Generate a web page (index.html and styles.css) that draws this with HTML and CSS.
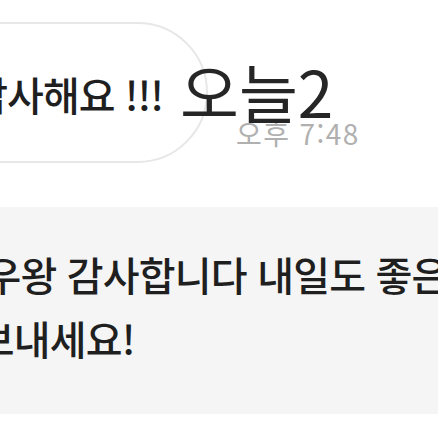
FILE: index.html
```html
<!DOCTYPE html>
<html lang="ko">
<head>
<meta charset="utf-8">
<link rel="stylesheet" href="styles.css">
</head>
<body>
<div class="chat">
  <div class="row">
    <div class="bubble"><span class="msg">정말 감사해요 !!!</span></div>
    <span class="time">오후 7:48</span>
    <span class="note">오늘2</span>
  </div>
  <div class="panel">
    <div class="line l1">너무 우왕 감사합니다 내일도 좋은 하루</div>
    <div class="line l2">좋은 하루 보내세요!</div>
  </div>
</div>
</body>
</html>
```
FILE: styles.css
```css
html, body {
  margin: 0;
  padding: 0;
  background: #ffffff;
}
body {
  width: 438px;
  height: 438px;
  overflow: hidden;
  font-family: "Noto Sans CJK KR", "Noto Sans", sans-serif;
  color: #1f1f1f;
}
.chat {
  padding-top: 22px;
}
.row {
  position: relative;
  display: flex;
  align-items: flex-end;
}
.bubble {
  flex: none;
  box-sizing: border-box;
  width: 410px;
  height: 141px;
  margin-left: -202px;
  border: 2px solid #e7e7e7;
  border-radius: 71px;
  background: #ffffff;
  display: flex;
  align-items: center;
  justify-content: flex-end;
  padding-right: 43px;
}
.msg {
  font-size: 40px;
  font-weight: 500;
  white-space: nowrap;
  letter-spacing: -1px;
  line-height: 1;
  margin-top: 2px;
}
.time {
  flex: none;
  margin-left: 28px;
  margin-bottom: 12px;
  font-size: 28px;
  font-weight: 400;
  letter-spacing: 1.4px;
  line-height: 1.2;
  color: #b0b0b0;
  white-space: nowrap;
}
.note {
  position: absolute;
  left: 180px;
  top: 30px;
  font-size: 64px;
  font-weight: 400;
  line-height: 1.2;
  color: #262626;
  white-space: nowrap;
}
.panel {
  margin-top: 44px;
  height: 207px;
  background: #f5f5f5;
  box-sizing: border-box;
  padding-top: 35px;
}
.line {
  font-size: 40px;
  font-weight: 500;
  line-height: 64px;
  white-space: nowrap;
  letter-spacing: -0.8px;
  color: #1f1f1f;
}
.l1 {
  margin-left: -98px;
}
.l2 {
  margin-left: -187px;
}
```
